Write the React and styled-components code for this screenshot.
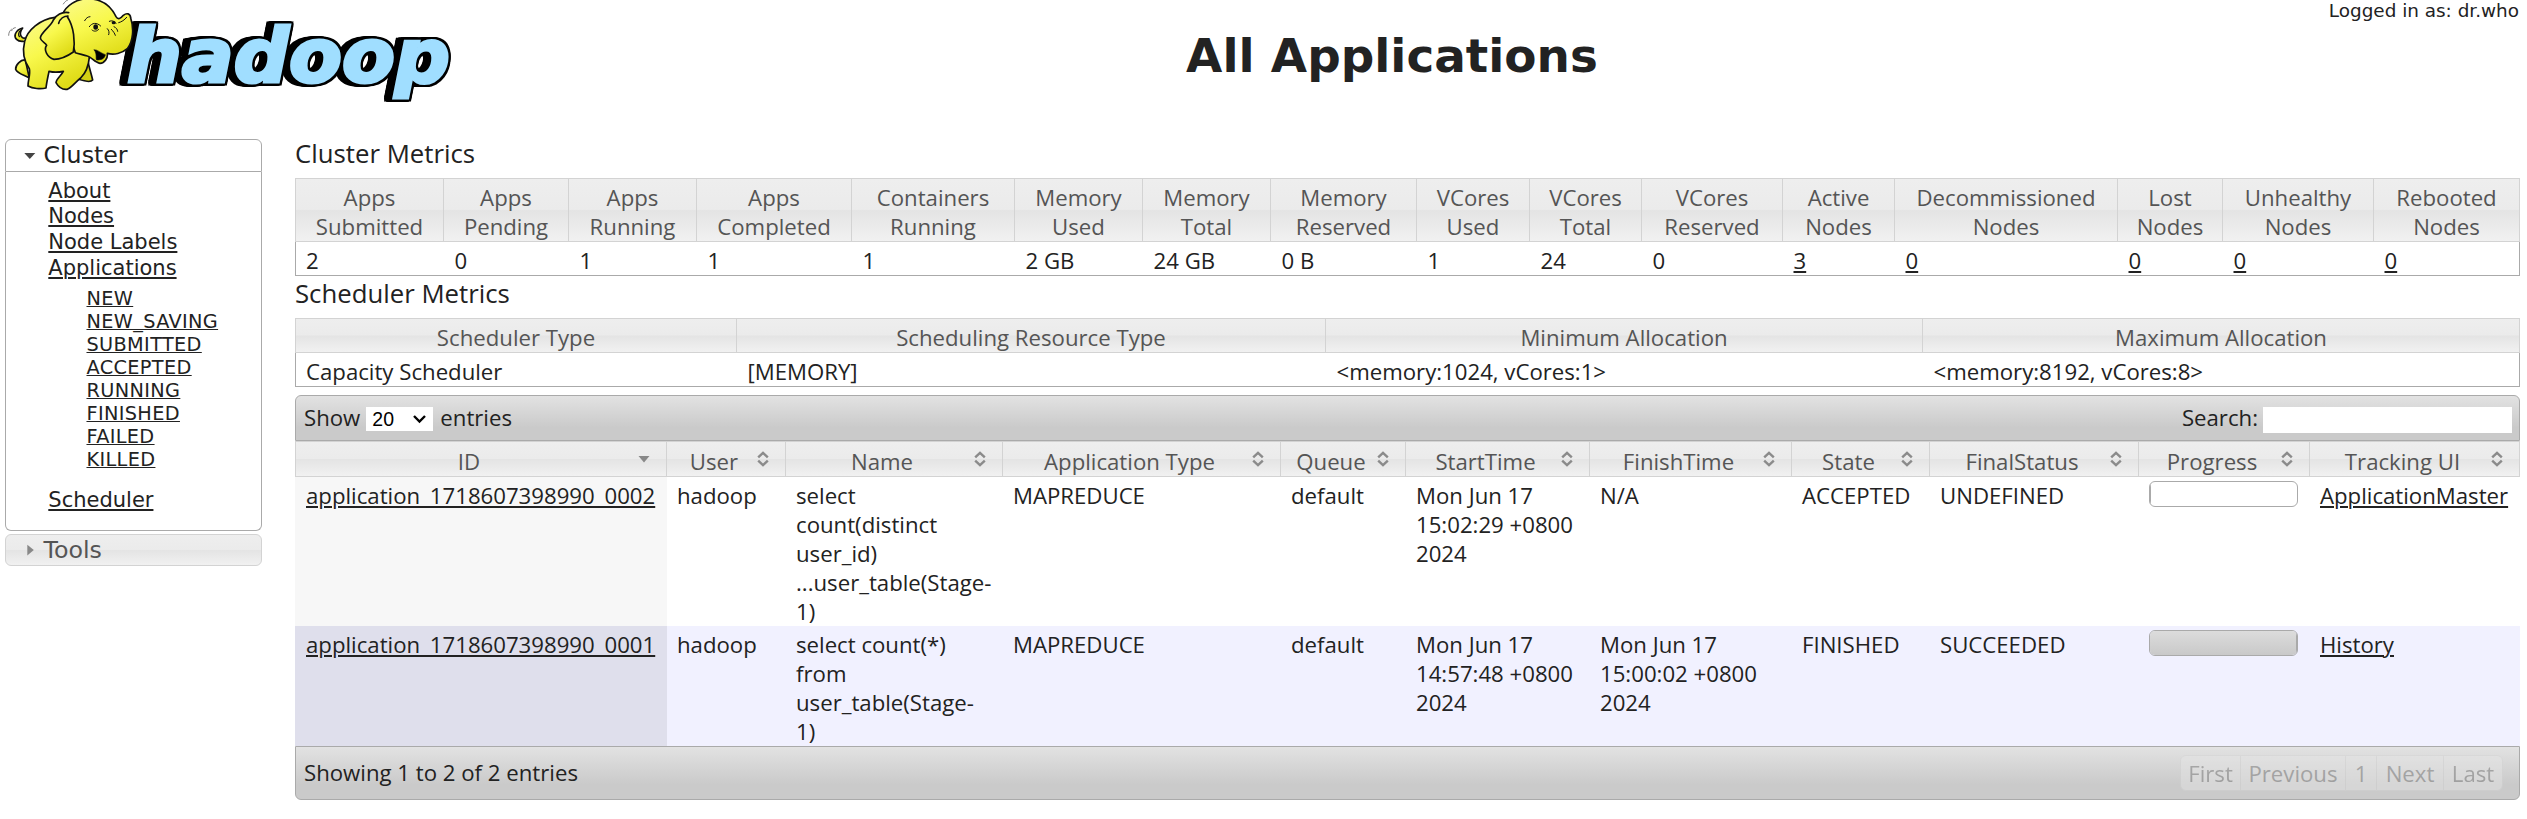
import React from "react";
import styled, { createGlobalStyle, css } from "styled-components";

const SANS = '"Open Sans", "Noto Sans", sans-serif';
const NAV = '"DejaVu Sans", Verdana, sans-serif';

const GlobalStyle = createGlobalStyle`
  *, *::before, *::after { box-sizing: border-box; }
  body {
    margin: 0;
    background: #fff;
    color: #222;
    font: 22.2px/29px ${SANS};
  }
`;

const glass = css`
  background: linear-gradient(#eeeeee 0%, #ebebeb 49%, #e4e4e4 51%, #f1f1f1 100%);
`;
const highlight = css`
  background: linear-gradient(#e2e2e2 0%, #cacaca 72%, #cacaca 100%);
`;

const Page = styled.div`
  width: 2527px;
  height: 819px;
  overflow: hidden;
`;

/* ---------- header ---------- */
const Header = styled.header`
  display: flex;
  height: 136px;
  padding-right: 8px;
`;
const Brand = styled.div`
  width: 265px;
  flex: none;
`;
const LogoArt = styled.svg`
  display: block;
`;
const Wordmark = styled.text`
  font: italic bold 75px ${NAV};
  fill: #a0deff;
  stroke: #a0deff;
  stroke-width: 3.2px;
  stroke-linejoin: miter;
  filter: drop-shadow(2px 0 0 #000) drop-shadow(-2px 0 0 #000) drop-shadow(0 2px 0 #000)
    drop-shadow(0 -2px 0 #000) drop-shadow(-3px 0 0 #000) drop-shadow(-3px 0 0 #000);
`;
const Banner = styled.div`
  flex: 1;
`;
const Login = styled.div`
  font: 18.4px/21px ${NAV};
  text-align: right;
`;
const Title = styled.h1`
  margin: 7px 0 0;
  font: bold 46.9px/56px ${NAV};
  text-align: center;
`;

/* ---------- navigation ---------- */
const Columns = styled.div`
  display: flex;
  align-items: flex-start;
  padding: 0 7px 0 5px;
`;
const Sidebar = styled.nav`
  width: 257px;
  margin: 3px 33px 0 0;
  flex: none;
  font-family: ${NAV};
`;
const Section = styled.div`
  display: flex;
  align-items: center;
  height: ${(p) => (p.$open ? 33 : 32)}px;
  padding-left: 17px;
  gap: 6.5px;
  font-size: 23.7px;
  border: 1px solid ${(p) => (p.$open ? "#aaa" : "#d3d3d3")};
  border-radius: ${(p) => (p.$open ? "6px 6px 0 0" : "6px")};
  color: ${(p) => (p.$open ? "#222" : "#555")};
  ${(p) => (p.$open ? "background: #fff;" : glass)}
`;
const Panel = styled.div`
  height: 359px;
  margin-bottom: 3px;
  padding: 6.6px 0 0 42.3px;
  border: 1px solid #aaa;
  border-top: 0;
  border-radius: 0 0 6px 6px;
`;
const NavList = styled.ul`
  margin: 0;
  padding: 0;
  list-style: none;
  font-size: 21px;
  line-height: 25.7px;
`;
const SubList = styled.ul`
  margin: 7px 0 16px;
  padding: 0 0 0 38.2px;
  list-style: none;
  font-size: 19.3px;
  line-height: 22.9px;
  letter-spacing: 0.35px;
`;
const Anchor = styled.a`
  color: #222;
  text-decoration: underline;
  text-decoration-thickness: ${(p) => (p.$thin ? 1 : 2)}px;
  text-underline-offset: ${(p) => (p.$thin ? 1 : 2)}px;
`;

/* ---------- content ---------- */
const Content = styled.main`
  width: 2225px;
`;
const Caption = styled.h2`
  margin: 0 0 8px;
  font-size: 25.75px;
  font-weight: 400;
  line-height: 34px;
`;
const Table = styled.table`
  width: 100%;
  table-layout: fixed;
  border-collapse: separate;
  border-spacing: 0;
`;
const HeadCell = styled.th`
  padding: ${(p) => (p.$sortable ? "5px 10px 0" : "4px 10px 0")};
  border: 1px solid #d3d3d3;
  border-left-width: ${(p) => (p.$first ? 1 : 0)}px;
  color: #555;
  font-weight: 400;
  text-align: center;
  white-space: pre-line;
  ${glass}
`;
const MetricCell = styled.td`
  padding: 4px 0 0 10.5px;
  border-bottom: 1px solid #aaa;
  white-space: nowrap;
  &:first-child { border-left: 1px solid #aaa; padding-left: 10px; }
  &:last-child { border-right: 1px solid #aaa; }
`;
const Toolbar = styled.div`
  display: flex;
  align-items: flex-start;
  height: ${(p) => (p.$bottom ? 54 : 46)}px;
  margin-top: ${(p) => (p.$bottom ? 0 : 8)}px;
  padding: ${(p) => (p.$bottom ? "8px 16px 0 8px" : "7px 7px 0 8px")};
  border: 1px solid #aaa;
  border-radius: ${(p) => (p.$bottom ? "0 0 6px 6px" : "6px 6px 0 0")};
  ${highlight}
`;
const Spacer = styled.div`
  flex: 1;
`;
const Select = styled.div`
  display: flex;
  align-items: center;
  justify-content: space-between;
  width: 67px;
  height: 24px;
  margin: 4px 7px 0 6px;
  padding: 0 6px;
  background: #fff;
  color: #000;
  font: 19.5px/24px "Liberation Sans", Arial, sans-serif;
`;
const SearchInput = styled.input`
  width: 249px;
  height: 26px;
  margin: 4px 0 0 5px;
  padding: 0 4px;
  border: 0;
  background: #fff;
`;
const Sortable = styled.div`
  display: flex;
  align-items: flex-start;
`;
const SortLabel = styled.span`
  flex: 1;
  white-space: nowrap;
`;
const SortIcon = styled.svg`
  flex: none;
`;
const Row = styled.tr`
  background: ${(p) => (p.$even ? "#f1f1ff" : "#fff")};
`;
const Cell = styled.td`
  height: ${(p) => p.$h}px;
  padding: 4px 0 0 10px;
  vertical-align: top;
  white-space: pre-line;
  &:first-child {
    padding-left: 11px;
    background: ${(p) => (p.$even ? "#dfdfec" : "#f7f7f7")};
  }
`;
const Progress = styled.div`
  width: 149px;
  height: 26px;
  overflow: hidden;
  border: 1px solid #aaa;
  border-radius: 6px;
`;
const ProgressValue = styled.div`
  height: 100%;
  border-right: 1px solid #aaa;
  background: linear-gradient(#dcdcdc, #c9c9c9);
`;
const Info = styled.div`
  padding-top: 3px;
`;
const Pager = styled.div`
  display: flex;
  height: 36px;
  opacity: 0.45;
`;
const PageButton = styled.span`
  width: ${(p) => p.$w}px;
  padding-top: 3px;
  margin-right: -1px;
  border: 1px solid #d3d3d3;
  background: #e8e8e8;
  color: #666;
  text-align: center;
  opacity: 0.95;
  &:first-child { border-radius: 6px 0 0 6px; }
  &:last-child { border-radius: 0 6px 6px 0; margin-right: 0; }
`;

const STATES = ["NEW", "NEW_SAVING", "SUBMITTED", "ACCEPTED", "RUNNING", "FINISHED", "FAILED", "KILLED"];

const CLUSTER = [
  ["Apps\nSubmitted", "2", 149],
  ["Apps\nPending", "0", 125],
  ["Apps\nRunning", "1", 128],
  ["Apps\nCompleted", "1", 155],
  ["Containers\nRunning", "1", 163],
  ["Memory\nUsed", "2 GB", 128],
  ["Memory\nTotal", "24 GB", 128],
  ["Memory\nReserved", "0 B", 146],
  ["VCores\nUsed", "1", 113],
  ["VCores\nTotal", "24", 112],
  ["VCores\nReserved", "0", 141],
  ["Active\nNodes", "3", 112, true],
  ["Decommissioned\nNodes", "0", 223, true],
  ["Lost\nNodes", "0", 105, true],
  ["Unhealthy\nNodes", "0", 151, true],
  ["Rebooted\nNodes", "0", 146, true],
];

const SCHEDULER = [
  ["Scheduler Type", "Capacity Scheduler", 442],
  ["Scheduling Resource Type", "[MEMORY]", 589],
  ["Minimum Allocation", "<memory:1024, vCores:1>", 597],
  ["Maximum Allocation", "<memory:8192, vCores:8>", 597],
];

const APP_COLUMNS = [
  ["ID", 372], ["User", 119], ["Name", 217], ["Application Type", 278], ["Queue", 125],
  ["StartTime", 184], ["FinishTime", 202], ["State", 138], ["FinalStatus", 209],
  ["Progress", 171], ["Tracking UI", 210],
];

const APPS = [
  {
    id: "application_1718607398990_0002",
    cells: ["hadoop", "select\ncount(distinct\nuser_id)\n...user_table(Stage-\n1)", "MAPREDUCE", "default",
      "Mon Jun 17\n15:02:29 +0800\n2024", "N/A", "ACCEPTED", "UNDEFINED"],
    progress: 0, link: "ApplicationMaster", h: 149,
  },
  {
    id: "application_1718607398990_0001",
    cells: ["hadoop", "select count(*)\nfrom\nuser_table(Stage-\n1)", "MAPREDUCE", "default",
      "Mon Jun 17\n14:57:48 +0800\n2024", "Mon Jun 17\n15:00:02 +0800\n2024", "FINISHED", "SUCCEEDED"],
    progress: 100, link: "History", h: 120,
  },
];

function Logo() {
  return (
    <LogoArt width="460" height="105" viewBox="0 0 460 105">
      <defs>
        <linearGradient id="skin" x1="0" y1="0" x2="0.5" y2="1">
          <stop offset="0" stopColor="#fbfb8e" />
          <stop offset="0.5" stopColor="#f8f84c" />
          <stop offset="1" stopColor="#e0dc18" />
        </linearGradient>
      </defs>
      <Wordmark x="127" y="82" textLength="323" lengthAdjust="spacingAndGlyphs">hadoop</Wordmark>
      <g transform="scale(0.33333)" fill="url(#skin)" stroke="#111" strokeWidth="5" strokeLinejoin="round" strokeLinecap="round">
        <path d="M70 124C52 126 42 114 46 102C50 92 60 86 68 84C62 92 60 100 62 106C64 112 70 116 74 114" />
        <path d="M62 92C56 96 54 104 58 110" fill="none" strokeWidth="4" />
        <path d="M26 106C26 98 29 92 34 88M35 92C36 87 40 84 46 83M190 12C194 6 198 2 203 0" fill="none" stroke="#666" strokeWidth="2.5" />
        <path d="M76 180C62 178 46 196 47 208C54 222 72 224 88 234Z" />
        <path d="M264 186C268 204 274 222 278 240C272 248 254 244 236 238L246 214Z" fill="#d3cf14" />
        <path d="M165 52C120 58 82 90 74 124C66 156 74 186 88 206C92 222 84 240 84 258C98 266 122 268 138 264C140 246 144 230 147 214C162 218 176 217 190 214C184 226 168 238 168 248C176 262 188 270 202 268C216 262 226 246 242 234C260 216 266 194 268 172L236 60Z" />
        <path d="M188 42C198 18 228 -4 264 -4C304 -3 332 16 348 50C354 60 362 56 370 46C380 38 391 40 392 54C402 84 400 124 382 146C366 160 342 166 322 160C324 174 314 190 300 190C284 188 276 172 262 168C250 164 238 162 226 158Z" />
        <path d="M283 150C292 148 296 156 316 164C314 176 304 180 290 180C286 176 292 164 283 150Z" fill="#000" strokeWidth="2" />
        <path d="M206 38C186 34 168 46 160 60C154 78 122 98 121 114C122 124 136 128 140 136C130 150 142 172 162 178C182 178 206 166 220 156C226 126 222 80 202 50" />
        <path d="M176 70C180 56 192 48 204 48" fill="none" strokeWidth="5" />
        <path d="M254 62C258 54 264 50 270 50M268 80C276 68 290 66 302 78M328 64C336 60 344 64 348 70M276 90C282 96 292 94 296 88M322 86C328 92 328 98 326 104M334 88C340 94 344 100 346 106M342 80C350 84 352 88 353 94M356 68C364 66 374 60 380 52" fill="none" strokeWidth="3" />
        <ellipse cx="287" cy="81" rx="7" ry="8" fill="#111" stroke="none" />
        <ellipse cx="341" cy="68" rx="6" ry="5" fill="#111" stroke="none" />
      </g>
    </LogoArt>
  );
}

function Sort({ active }) {
  return (
    <SortIcon width="24" height="24" viewBox="0 0 24 24">
      {active ? (
        <path d="M6.5 9H17.5L12 15.4Z" fill="#888" />
      ) : (
        <path d="M7.2 10.4L12 5.8L16.8 10.4M7.2 13.6L12 18.2L16.8 13.6" fill="none" stroke="#8b8b8b" strokeWidth="2.4" />
      )}
    </SortIcon>
  );
}

function Metrics({ items }) {
  return (
    <Table>
      <colgroup>{items.map((m, i) => <col key={i} width={m[2]} />)}</colgroup>
      <thead>
        <tr>{items.map((m, i) => <HeadCell key={i} $first={i === 0}>{m[0]}</HeadCell>)}</tr>
      </thead>
      <tbody>
        <tr>{items.map((m, i) => <MetricCell key={i}>{m[3] ? <Anchor>{m[1]}</Anchor> : m[1]}</MetricCell>)}</tr>
      </tbody>
    </Table>
  );
}

export default function App() {
  return (
    <Page>
      <GlobalStyle />
      <Header>
        <Brand><Logo /></Brand>
        <Banner>
          <Login>Logged in as: dr.who</Login>
          <Title>All Applications</Title>
        </Banner>
      </Header>
      <Columns>
        <Sidebar>
          <Section $open>
            <svg width="14" height="14" viewBox="0 0 14 14"><path d="M1.3 4H12.3L6.8 10Z" fill="#444" /></svg>
            Cluster
          </Section>
          <Panel>
            <NavList>
              {["About", "Nodes", "Node Labels", "Applications"].map((t) => <li key={t}><Anchor>{t}</Anchor></li>)}
            </NavList>
            <SubList>
              {STATES.map((t) => <li key={t}><Anchor $thin>{t}</Anchor></li>)}
            </SubList>
            <NavList><li><Anchor>Scheduler</Anchor></li></NavList>
          </Panel>
          <Section>
            <svg width="14" height="14" viewBox="0 0 14 14"><path d="M4.3 1.7V12.5L10.8 7Z" fill="#888" /></svg>
            Tools
          </Section>
        </Sidebar>
        <Content>
          <Caption>Cluster Metrics</Caption>
          <Metrics items={CLUSTER} />
          <Caption>Scheduler Metrics</Caption>
          <Metrics items={SCHEDULER} />
          <Toolbar>
            Show
            <Select>
              20
              <svg width="15" height="10" viewBox="0 0 15 10"><path d="M2 2L7.5 7.5L13 2" fill="none" stroke="#000" strokeWidth="2.4" /></svg>
            </Select>
            entries
            <Spacer />
            Search:
            <SearchInput type="text" aria-label="Search" />
          </Toolbar>
          <Table>
            <colgroup>{APP_COLUMNS.map((c) => <col key={c[0]} width={c[1]} />)}</colgroup>
            <thead>
              <tr>
                {APP_COLUMNS.map((c, i) => (
                  <HeadCell key={c[0]} $first={i === 0} $sortable>
                    <Sortable><SortLabel>{c[0]}</SortLabel><Sort active={i === 0} /></Sortable>
                  </HeadCell>
                ))}
              </tr>
            </thead>
            <tbody>
              {APPS.map((a, r) => (
                <Row key={a.id} $even={r === 1}>
                  <Cell $h={a.h} $even={r === 1}><Anchor>{a.id}</Anchor></Cell>
                  {a.cells.map((t, i) => <Cell key={i}>{t}</Cell>)}
                  <Cell>
                    <Progress><ProgressValue style={{ width: `${a.progress}%` }} /></Progress>
                  </Cell>
                  <Cell><Anchor>{a.link}</Anchor></Cell>
                </Row>
              ))}
            </tbody>
          </Table>
          <Toolbar $bottom>
            <Info>Showing 1 to 2 of 2 entries</Info>
            <Spacer />
            <Pager>
              <PageButton $w={61}>First</PageButton>
              <PageButton $w={106}>Previous</PageButton>
              <PageButton $w={32}>1</PageButton>
              <PageButton $w={68}>Next</PageButton>
              <PageButton $w={60}>Last</PageButton>
            </Pager>
          </Toolbar>
        </Content>
      </Columns>
    </Page>
  );
}
